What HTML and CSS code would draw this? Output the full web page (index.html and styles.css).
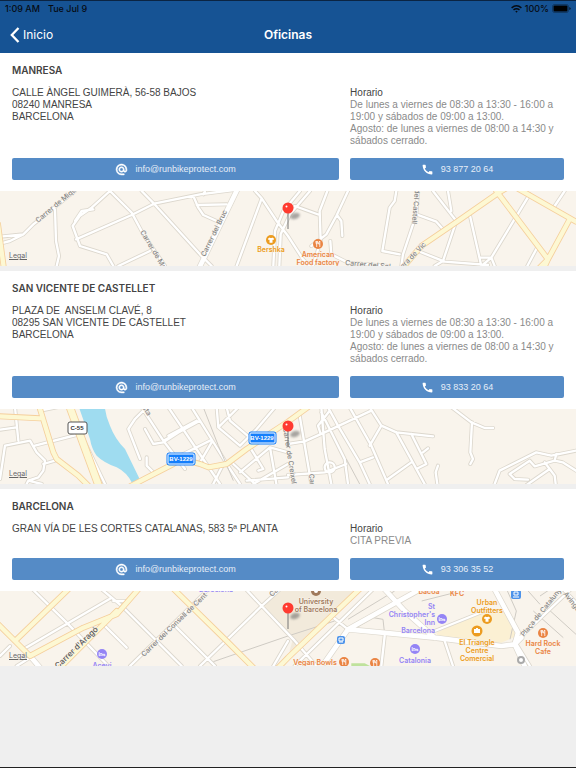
FILE: index.html
```
<!DOCTYPE html>
<html lang="es">
  <head>
    <meta charset="utf-8">
    <meta name="viewport" content="width=device-width">
    <title>Oficinas</title>

    <link rel="stylesheet" href="styles.css">
  </head>

  <body>
    <!-- shared icons -->
    <svg class="sprite" width="0" height="0" aria-hidden="true">
      <defs>
        <symbol id="icon-email" viewBox="0 0 24 24">
          <path d="M12 1.95c-5.52 0-10 4.48-10 10s4.48 10 10 10h5v-2h-5c-4.34 0-8-3.66-8-8s3.66-8 8-8 8 3.66 8 8v1.43c0 .79-.71 1.57-1.5 1.57s-1.500-.78-1.500-1.570v-1.430c0-2.760-2.240-5-5-5s-5 2.240-5 5 2.240 5 5 5c1.380 0 2.640-.56 3.540-1.470.65.89 1.770 1.470 2.960 1.470 1.970 0 3.500-1.600 3.500-3.570v-1.430c0-5.520-4.480-10-10-10zm0 13c-1.660 0-3-1.340-3-3s1.340-3 3-3 3 1.340 3 3-1.340 3-3 3z" stroke="#fff"/>
        </symbol>
        <symbol id="icon-phone" viewBox="0 0 24 24">
          <path d="M20.010 15.380c-1.230 0-2.420-.2-3.530-.56-.35-.12-.74-.03-1.010.24l-1.570 1.970c-2.830-1.350-5.480-3.900-6.890-6.830l1.950-1.660c.27-.28.35-.67.24-1.020-.37-1.110-.56-2.300-.56-3.530 0-.54-.45-.99-.99-.99H4.190C3.650 3 3 3.240 3 3.990 3 13.280 10.730 21 20.010 21c.71 0 .99-.63.99-1.180v-3.450c0-.54-.45-.99-.99-.99z"/>
        </symbol>
        <symbol id="fork" viewBox="0 0 10 10">
          <circle cx="5" cy="5" r="5"/>
          <path d="M3 2v2.500q.7.700 1.400 0V2M3.700 2v6M6.800 8V2q-1.300.8-1.300 3h1.300" fill="none" stroke="#fff" stroke-width=".8"/>
        </symbol>
        <symbol id="shirt" viewBox="0 0 10 10">
          <circle cx="5" cy="5" r="5"/>
          <path d="M3.800 2.500q1.200 1 2.400 0l2 1.200-.8 1.400-.9-.3v3h-3v-3l-.9.3-.8-1.400z" fill="#fff"/>
        </symbol>
        <symbol id="bed" viewBox="0 0 10 10">
          <circle cx="5" cy="5" r="5"/>
          <path d="M2.200 3v4.200M2.200 6.200h5.600M7.800 7.200V5.300H4.800V4.500H3.300v1" fill="none" stroke="#fff" stroke-width=".8"/>
        </symbol>
        <symbol id="pin" viewBox="0 0 20 30" overflow="visible">
          <ellipse class="pin-shadow" cx="13" cy="13" rx="5" ry="3" transform="rotate(-18 13 13)"/>
          <path d="M6 10v16" stroke="#777" stroke-width="1"/>
          <circle cx="6" cy="5" r="5.500" fill="#ff3b30"/>
          <circle cx="4.500" cy="3.500" r="1" fill="#fff"/>
        </symbol>
      </defs>
    </svg>

    <header>
      <div class="status">
        <span>1:09 AM</span>
        <span>Tue Jul 9</span>
        <span class="status-right">
          <svg width="11" height="8" viewBox="0 0 11 8" fill="none" stroke="#060b12" stroke-width="1.500">
            <path d="M.6 2.900q4.900-4.200 9.800 0M2.500 4.900q3-2.400 6 0"/>
            <path d="M5.500 5.700l1.200.6-1.200 1.500-1.200-1.500z" fill="#060b12" stroke="none"/>
          </svg>
          100%
          <svg width="19" height="9" viewBox="0 0 19 9">
            <rect x=".5" y=".5" width="16" height="8" rx="2" fill="none" stroke="#060b12" stroke-opacity=".5" stroke-width=".7"/>
            <rect x="1.500" y="1.500" width="14" height="6" rx="1"/>
            <path d="M17.500 3v3q1-.5 1-1.500t-1-1.500"/>
          </svg>
        </span>
      </div>
      <nav>
        <a class="back" href="#">
          <svg width="10" height="16" viewBox="0 0 10 16"><path d="M8.500 1L1.800 8l6.700 7" fill="none" stroke="#fff" stroke-width="2.300"/></svg>
          Inicio
        </a>
        <h1>Oficinas</h1>
      </nav>
    </header>

    <main>
      <section class="office">
        <div class="info">
          <h2>MANRESA</h2>
          <p class="address">CALLE ÀNGEL GUIMERÀ, 56-58 BAJOS<br>08240 MANRESA<br>BARCELONA</p>
          <div class="hours">
            <h3>Horario</h3>
            <p>De lunes a viernes de 08:30 a 13:30 - 16:00 a 19:00 y sábados de 09:00 a 13:00.<br>Agosto: de lunes a viernes de 08:00 a 14:30 y sábados cerrado.</p>
          </div>
          <button type="button"><svg><use href="#icon-email"/></svg>info@runbikeprotect.com</button>
          <button type="button"><svg><use href="#icon-phone"/></svg>93 877 20 64</button>
        </div>
        <div class="map">
          <svg viewBox="0 0 576 75" preserveAspectRatio="xMidYMid slice">
            <defs>
              <path id="m1-roads" d="M0 137L70 130 100 100 225 0M0 158L30 150 70 130M165 55L168 150 177 195 170 225M330 0L275 50 240 74 218 105 240 165 320 190 340 225M225 90L245 60 280 55M330 0L395 65 430 130 495 225M228 145L395 72 462 38 600 10 700-3M425 0L462 38 600 190 635 225M580 15L595 50 610 72 650 90M590 42L680 40M610 10L615 0M450 180L355 225M765 0L785 22 830 90 864 135 909 205 930 225M785 22L710 225M820 225L825 120 850 60 900 0M838 225L842 130 870 70 930 0M884 45L959 72M982 0L959 60 962 150 939 225M1044 0L1009 75 979 130 934 165M1011 72L1024 90 1027 135M1189 0L1184 30 1169 50 1147 180 1199 190M991 150L994 190 1044 215 1164 225M1254 0L1249 70 1209 190 1204 225M1249 70L1309 92 1329 115M1299 0L1369 90 1329 210 1304 225M1344 0L1354 60M1254 180L1334 212 1464 222M1409 70L1444 225M1439 200H1474L1484 225M1589 10L1474 200 1444 225M1694 0L1664 45M1614 165L1582 225"/>
              <path id="m1-main" d="M1204 235L1264 165 1374 90 1496 5 1520-9M1489 0L1644 205 1614 235M1540-15L1728 92M1709 85L1644 205 1630 235M-6 100L12 235"/>
            </defs>
            <g transform="scale(.33333)">
              <use href="#m1-roads" class="casing"/>
              <path class="casing wide" d="M712-5L598 230"/>
              <use href="#m1-roads" class="road"/>
              <path class="road wide" d="M712-5L598 230"/>
              <use href="#m1-main" class="main-casing"/>
              <use href="#m1-main" class="main-road"/>
            </g>
            <g class="street">
              <text transform="translate(38 32) rotate(-40)">Carrer de Miquel</text>
              <text transform="translate(140 41) rotate(59)">Carrer de Manresa</text>
              <text transform="translate(205 66) rotate(-64)">Carrer del Bruc</text>
              <text transform="translate(415 -2) rotate(95)">del Castell</text>
              <text transform="translate(345 74) rotate(5)">Carrer del Sol</text>
              <text transform="translate(403 78) rotate(-46)">era de Vic</text>
            </g>
            <g class="shop">
              <use href="#shirt" x="266" y="44" width="10" height="10"/>
              <text x="271" y="61">Bershka</text>
            </g>
            <g class="food">
              <use href="#fork" x="313" y="48" width="10" height="10"/>
              <text x="318" y="66">American</text>
              <text x="318" y="74">Food factory</text>
            </g>
            <use href="#pin" x="282" y="12" width="20" height="30"/>
          </svg>
          <a class="legal" href="#">Legal</a>
        </div>
      </section>

      <section class="office">
        <div class="info">
          <h2>SAN VICENTE DE CASTELLET</h2>
          <p class="address">PLAZA DE&nbsp; ANSELM CLAVÉ, 8<br>08295 SAN VICENTE DE CASTELLET<br>BARCELONA</p>
          <div class="hours">
            <h3>Horario</h3>
            <p>De lunes a viernes de 08:30 a 13:30 - 16:00 a 19:00 y sábados de 09:00 a 13:00.<br>Agosto: de lunes a viernes de 08:00 a 14:30 y sábados cerrado.</p>
          </div>
          <button type="button"><svg><use href="#icon-email"/></svg>info@runbikeprotect.com</button>
          <button type="button"><svg><use href="#icon-phone"/></svg>93 833 20 64</button>
        </div>
        <div class="map">
          <svg viewBox="0 0 576 75" preserveAspectRatio="xMidYMid slice">
            <defs>
              <path id="m2-roads" d="M0 62L50 55M45-5L55 95M120 5L170-5M0 210L15 110 90 95 110 130 135 155 130 185 115 205 85 215 80 225M85 215L125 225M105 110L240 75M165 155L130 165M250 90L315 225M440-5L405 30 385 60 420 150M425-5L490 95 555 180M435 60L460 105 490 100 590 35M505 80L590 35M490 95L600 35M505-5L660 225M575-5L690 180 720 225M440 145V170L460 190M540 140L630 95M600 160L635 100M650-5L655 55 720 110M680-5L690 35 760 95M655 55L715-5M825-5L770 60 720 110M670 165L640 225M760 225L864 165M700 165L765 225M810 115L830 230M750 115L790 180 775 185M720 190L810 115 864 130M740 215L864 205M864 105L914 97 974 70 1114 5M899 20L934 225M964-5L974 120 994 225M989 5L954 50 962 75M984-5L1014 50 1079 160 1109 225M964 10L1034 150 1044 225M1049-5L1114 110 1164 225M1109-5L1144 50 1109 110M1144 50L1189 70 1299 82M1189 70L1274 225M1234 75L1279 165 1249 180M1269 130L1284 118M1164 210L1234 160M1079 160L1119 145M864 198L974 190 1039 165M1314 170L1307 190 1312 225M1355-5L1414 40 1454 57 1479 57M1416 40L1411 130 1419 150 1411 165M1484 225L1499 185 1609 130 1654 140 1728 125M1529 195L1589 155 1604 172 1664 155 1669 135M1529 195L1544 210 1584 212M1580 228L1649 180 1634 160M1649 180L1664 200 1667 225M1664 155L1688 160 1728 185M974 175a15 15 0 1 0 30 0a15 15 0 1 0 -30 0"/>
              <path id="m2-main" d="M0 22L120 28M117-10L160 130 170 150 235 200 270 235M390 232L520 165 545 150 600 165 625 175 680 165 740 120 864 38 930-10"/>
            </defs>
            <g transform="scale(.33333)">
              <path fill="#9fdcf0" d="M238-2H315Q318 25 330 50Q345 90 375 120L420 212 395 220Q380 190 350 175Q310 160 290 140 275 120 270 90z"/>
              <use href="#m2-roads" class="casing"/>
              <use href="#m2-roads" class="road"/>
              <path class="rail" d="M610-5L655 110 700 215M1039 150L1079 225"/>
              <use href="#m2-main" class="main-casing"/>
              <path class="main-casing wide" d="M208-10L298 235"/>
              <use href="#m2-main" class="main-road"/>
              <path class="main-road wide" d="M208-10L298 235"/>
            </g>
            <g class="street">
              <text transform="translate(142 -1) rotate(55)">sta</text>
              <text transform="translate(283 19) rotate(81)">Carrer de Creixell</text>
              <text transform="translate(309 65) rotate(85)">Carrer</text>
            </g>
            <g class="shield">
              <rect x="68" y="13" width="19" height="12" rx="2" fill="#fff" stroke="#555"/>
              <text x="77" y="21" fill="#333">C-55</text>
              <rect x="167" y="44" width="28" height="12" rx="2" fill="#147efb" stroke="#147efb"/>
              <rect x="168" y="45" width="26" height="10" rx="1" fill="none" stroke="#fff"/>
              <text x="181" y="52" fill="#fff">BV-1229</text>
              <rect x="249" y="23" width="27" height="12" rx="2" fill="#147efb" stroke="#147efb"/>
              <rect x="250" y="24" width="25" height="10" rx="1" fill="none" stroke="#fff"/>
              <text x="262" y="31" fill="#fff">BV-1229</text>
            </g>
            <use href="#pin" x="282" y="12" width="20" height="30"/>
          </svg>
          <a class="legal" href="#">Legal</a>
        </div>
      </section>

      <section class="office">
        <div class="info">
          <h2>BARCELONA</h2>
          <p class="address">GRAN VÍA DE LES CORTES CATALANAS, 583 5ª PLANTA</p>
          <div class="hours">
            <h3>Horario</h3>
            <p>CITA PREVIA</p>
          </div>
          <button type="button"><svg><use href="#icon-email"/></svg>info@runbikeprotect.com</button>
          <button type="button"><svg><use href="#icon-phone"/></svg>93 306 35 52</button>
        </div>
        <div class="map">
          <svg viewBox="0 0 576 75" preserveAspectRatio="xMidYMid slice">
            <defs>
              <path id="m3-roads" d="M98-5L200 95 325 225M70 175L335 20M305-5L365 45 545 225M340 30L375 30M310 100L380 170M625-5L390 225M738-5L785 45 880 145 949 225M840-5L785 45 600 225M520 100L645 225M0 195L30 165M50 225L90 200M1119-5L884 225M994 75L1044 115M1304 120L1454 60M1154 135L1144 225M1334 150L1359 225M1728-20L1560 140M1544 150L1590 225M1690-5L1728 35M864 150L820 225"/>
              <path id="m3-wide" d="M1260-5L1044 115 974 215M1044 115L1304 140 1504 165 1544 160 1564 140M1154-5L1214 60 1304 140M1484-5L1554 125 1544 160 1574 225M90 195L120 230"/>
              <path id="m3-main" d="M205-5L45 150M-5 100L90 195 250 110 350 70 415-5M350 60L180 230M522-5L680 150 760 230M830 235L864 200 1078-5"/>
            </defs>
            <g transform="scale(.33333)">
              <path fill="#f2eadb" d="M787 45L835-2H1065L868 183 880 140z"/>
              <path fill="#fbf0d3" d="M1310 125L1454 55 1510 60 1550 135 1504 155 1310 135z"/>
              <path fill="#bfe29c" d="M1054 217H1094L1110 225H1054z"/>
              <path class="rail" d="M640 212L864 135 1004 90M1044 85L1184 0M1060 115L1120 80 1149 85 1154 130M1265 30L1364 5M1520-5L1549 60 1530 145M1580-5L1620 40M1600 60L1690 140M1620 15L1650-5M1640 50L1728 130"/>
              <use href="#m3-roads" class="casing"/>
              <use href="#m3-wide" class="casing wide"/>
              <use href="#m3-roads" class="road"/>
              <use href="#m3-wide" class="road wide"/>
              <use href="#m3-main" class="main-casing"/>
              <use href="#m3-main" class="main-road"/>
            </g>
            <g class="street">
              <text transform="translate(144 66) rotate(-44)">Carrer del Consell de Cent</text>
              <text transform="translate(272 6) rotate(-44)">Car</text>
              <text transform="translate(524 46) rotate(-51)">Plaça de Catalunya</text>
              <text transform="translate(563 3) rotate(52)">Avinguda</text>
              <text class="street-big" transform="translate(58 78) rotate(-44)">Carrer d'Aragó</text>
            </g>
            <g class="hotel">
              <text x="216" y="1">Barcelona</text>
              <use href="#bed" x="97" y="58" width="10" height="10"/>
              <text x="102" y="77">Acevi</text>
              <text class="end" x="435" y="18">St</text>
              <text class="end" x="435" y="26">Christopher's</text>
              <text class="end" x="435" y="34">Inn</text>
              <text class="end" x="435" y="42">Barcelona</text>
              <use href="#bed" x="437" y="23" width="10" height="10"/>
              <use href="#bed" x="410" y="53" width="10" height="10"/>
              <text x="415" y="72">Catalonia</text>
            </g>
            <g class="school">
              <circle cx="316" cy="0" r="5"/>
              <circle cx="316" cy="0" r="2" fill="#fff"/>
              <text x="316" y="13">University</text>
              <text x="316" y="21">of Barcelona</text>
            </g>
            <g class="food">
              <text x="429" y="3">Bacoa</text>
              <text x="457" y="5">KFC</text>
              <text x="315" y="74">Vegan Bowls</text>
              <use href="#fork" x="339" y="66" width="10" height="10"/>
              <use href="#fork" x="370" y="67" width="10" height="10"/>
              <use href="#fork" x="538" y="37" width="10" height="10"/>
              <text x="543" y="55">Hard Rock</text>
              <text x="543" y="63">Cafe</text>
            </g>
            <g class="shop">
              <text x="487" y="14">Urban</text>
              <text x="487" y="22">Outfitters</text>
              <use href="#shirt" x="482" y="23" width="10" height="10"/>
              <circle cx="477" cy="40" r="5.500"/>
              <path d="M474 38h6v4h-6zM476 38v-1h2v1" fill="#fff"/>
              <text x="477" y="54">El Triangle</text>
              <text x="477" y="62">Centre</text>
              <text x="477" y="70">Comercial</text>
            </g>
            <g fill="#4d93ea">
              <rect x="337" y="45" width="8" height="8" rx="2"/>
              <rect x="511" y="-1" width="10" height="9" rx="2"/>
              <path d="M339 50v-3h4v3zM339 51h4M514 1h4v3h-4zM513 6h6" fill="none" stroke="#fff"/>
            </g>
            <circle cx="521" cy="69" r="3" fill="#fff" stroke="#aaa" stroke-width="2"/>
            <use href="#pin" x="282" y="12" width="20" height="30"/>
          </svg>
          <a class="legal" href="#">Legal</a>
        </div>
      </section>
    </main>
  </body>
</html>
```

FILE: styles.css
```
* {
    box-sizing: border-box;
}
body {
    margin: 0;
    min-height: 100vh;
    background: #efefef;
    border-bottom: 1px solid #222;
    color: #444;
    font: 10px/12px "Liberation Sans", Arial, sans-serif;
}
h1, h2, h3, p {
    margin: 0;
}
.sprite {
    position: absolute;
}

/* header */
header {
    background: #165394;
    border-top: 1px solid #0b2442;
    font-family: Inter, "Liberation Sans", sans-serif;
}
.status {
    display: flex;
    gap: 8px;
    height: 15px;
    padding: 0 5px;
    align-items: center;
    color: #060b12;
    font-size: 9px;
    font-weight: 500;
}
.status-right {
    display: flex;
    align-items: center;
    gap: 3px;
    margin-left: auto;
}
nav {
    display: grid;
    grid-template-columns: 1fr auto 1fr;
    align-items: center;
    height: 37px;
    padding: 0 10px;
    color: #fff;
}
.back {
    display: flex;
    align-items: center;
    gap: 3px;
    color: #fff;
    font-size: 12px;
    text-decoration: none;
}
h1 {
    font-size: 12px;
    font-weight: 600;
}

/* offices */
.office {
    background: #fff;
    margin-bottom: 5px;
}
.info {
    display: grid;
    grid-template-columns: 26fr 17fr;
    gap: 11px;
    padding: 11px 12px;
}
h2 {
    grid-column: 1 / 3;
    font: 600 10px/12px Inter, "Liberation Sans", sans-serif;
}
h3 {
    font-size: 10px;
    font-weight: 400;
}
.hours p {
    color: #8a8a8a;
}
button {
    display: flex;
    align-items: center;
    justify-content: center;
    gap: 7px;
    height: 22px;
    padding: 0;
    border: 0;
    border-radius: 2px;
    background: #558bc6;
    color: #e6eef8;
    font: 9px/12px "Liberation Sans", Arial, sans-serif;
}
button svg {
    width: 13px;
    height: 13px;
    fill: #fff;
}

/* maps */
.map {
    position: relative;
    height: 75px;
    background: #f9f4ec;
    overflow: hidden;
}
.map > svg {
    display: block;
    width: 100%;
    height: 75px;
}
.legal {
    position: absolute;
    left: 9px;
    bottom: 4px;
    color: #666;
    font-size: 7px;
    font-family: Inter, "Liberation Sans", sans-serif;
    text-shadow: 0 0 1px #fff;
}
.casing, .road, .main-casing, .main-road {
    fill: none;
    stroke-linejoin: round;
    stroke-linecap: round;
}
.casing {
    stroke: #dcd7cd;
    stroke-width: 12px;
}
.road {
    stroke: #fff;
    stroke-width: 7px;
}
.main-casing {
    stroke: #f5cf9c;
    stroke-width: 18px;
}
.main-road {
    stroke: #fdf8d3;
    stroke-width: 13px;
}
.casing.wide {
    stroke-width: 18px;
}
.road.wide {
    stroke-width: 14px;
}
.main-casing.wide {
    stroke-width: 25px;
}
.main-road.wide {
    stroke-width: 20px;
}
.rail {
    fill: none;
    stroke: #cfcbc4;
    stroke-width: 3px;
}
.map text {
    font: 500 7px Inter, "Liberation Sans", sans-serif;
    text-anchor: middle;
    stroke: #f9f4ec;
    stroke-width: 1px;
    paint-order: stroke;
}
.map .street text {
    fill: #858585;
    text-anchor: start;
}
.map .street .street-big {
    fill: #555;
    font-size: 8px;
}
.map .shield text {
    font: bold 6px "Liberation Sans", Arial, sans-serif;
    stroke: none;
}
.map .end {
    text-anchor: end;
}
.map .shop text, .map .food text, .map .hotel text, .map .school text {
    font-weight: 600;
}
.shop {
    fill: #ec9c20;
}
.food {
    fill: #ea8443;
}
.hotel {
    fill: #9484f5;
}
.school {
    fill: #a07a5c;
}
.pin-shadow {
    fill: #555;
    opacity: .5;
    filter: blur(1px);
}
```
